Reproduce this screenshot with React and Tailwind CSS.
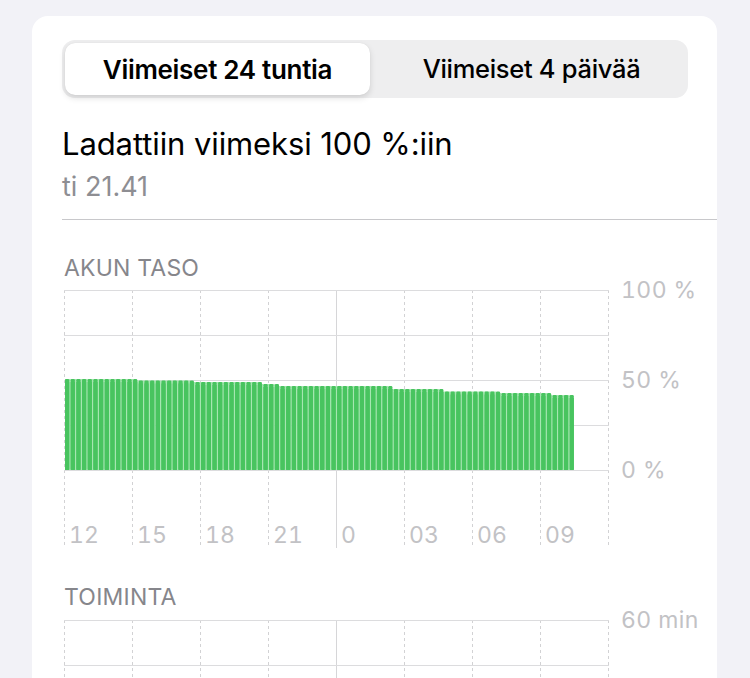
import React from "react";

const FONT = { fontFamily: "Inter, 'Noto Sans', sans-serif" };

const steps = [
  [137, 91],
  [195, 89.5],
  [258, 88],
  [280, 86],
  [392, 84],
  [444, 81],
  [496, 78.5],
  [548, 77],
  [9999, 75],
];

const BAR_P = 5.67;
const bars = Array.from({ length: 90 }, (_, i) => {
  const ax = 65 + i * BAR_P;
  const h = steps.find((s) => ax < s[0])[1];
  return { x: ax - 62, h };
});

const VX = [2, 70, 138, 206, 274, 342, 410, 478, 546];

function GridLines({ hLines, height }) {
  return (
    <svg
      className="absolute inset-0 pointer-events-none"
      width="548"
      height={height}
      viewBox={`0 0 548 ${height}`}
    >
      {VX.map((x, i) => (
        <line
          key={"v" + i}
          x1={x + 0.5}
          x2={x + 0.5}
          y1={1}
          y2={height}
          stroke={i === 4 ? "#d6d6d8" : "#d2d2d4"}
          strokeWidth="1"
          strokeDasharray={i === 4 ? undefined : "3 3"}
        />
      ))}
      {hLines.map((y, i) => (
        <line
          key={"h" + i}
          x1={2}
          x2={547}
          y1={y}
          y2={y}
          stroke="#dcdcde"
          strokeWidth="1"
        />
      ))}
    </svg>
  );
}

const XLABELS = ["12", "15", "18", "21", "0", "03", "06", "09"];

export default function App() {
  return (
    <div
      className="w-[750px] h-[678px] overflow-hidden bg-[#f2f2f7]"
      style={FONT}
    >
      <div className="ml-[32px] mt-[16px] w-[685px] bg-white rounded-[16px] pt-[24px] pl-[30px] pb-[40px]">
        {/* Segmented control */}
        <div className="mr-[29px] h-[58px] rounded-[13px] bg-[#eeeeef] p-[3px] flex">
          <div className="w-[305px] h-full rounded-[10px] bg-white shadow-[0_3px_6px_rgba(0,0,0,0.13),0_0_1px_rgba(0,0,0,0.1)] flex items-center justify-center text-[26px] font-semibold text-black tracking-[-0.3px]">
            Viimeiset 24 tuntia
          </div>
          <div className="flex-1 h-full flex items-center justify-center pl-[8px] text-[25.5px] font-medium text-black tracking-[-0.3px]">
            Viimeiset 4 päivää
          </div>
        </div>

        {/* Title */}
        <div className="mt-[28px] text-[31px] leading-[36px] text-black tracking-[-0.1px]">
          Ladattiin viimeksi 100 %:iin
        </div>
        <div className="mt-[10px] text-[27px] leading-[30px] text-[#8e8e93]">
          ti 21.41
        </div>
        <div className="mt-[17px] h-px bg-[#c8c8cb]" />

        {/* Battery level */}
        <div className="mt-[35px] ml-[2px] text-[23px] leading-[26px] text-[#86868b] tracking-[0.2px]">
          AKUN TASO
        </div>
        <div className="mt-[8px] flex">
          <div className="relative w-[548px] h-[259px] flex flex-col">
            <GridLines hLines={[1.5, 46.5, 91.5, 136.5, 181.5]} height={259} />
            <svg
              className="relative"
              width="548"
              height="182"
              viewBox="0 0 548 182"
            >
              {bars.map((b, i) => (
                <g key={i}>
                  {i < bars.length - 1 && (
                    <rect
                      x={b.x}
                      y={181 - Math.min(b.h, bars[i + 1].h)}
                      width={BAR_P}
                      height={Math.min(b.h, bars[i + 1].h)}
                      fill="#a6e6b1"
                    />
                  )}
                  <rect
                    x={b.x}
                    y={181 - b.h}
                    width={4.2}
                    height={b.h}
                    rx="1.2"
                    fill="#48c45f"
                  />
                  <rect
                    x={b.x}
                    y={181 - b.h + 3}
                    width={4.2}
                    height={b.h - 3}
                    fill="#48c45f"
                  />
                </g>
              ))}
            </svg>
            <div className="relative ml-[2px] grid grid-cols-8 w-[544px] flex-1">
              {XLABELS.map((l) => (
                <div
                  key={l}
                  className="pl-[5px] pt-[51px] text-[23px] leading-[26px] text-[#c2c2c5] tabular-nums"
                >
                  {l}
                </div>
              ))}
            </div>
          </div>
          <div className="ml-[11px] mt-[1.5px] h-[180px] flex flex-col justify-between text-[23px] text-[#c2c2c5] tabular-nums tracking-[0.4px]">
            <div className="h-0 flex items-center">100 %</div>
            <div className="h-0 flex items-center">50 %</div>
            <div className="h-0 flex items-center">0 %</div>
          </div>
        </div>

        {/* Activity */}
        <div className="mt-[36px] ml-[2px] text-[23px] leading-[26px] text-[#86868b] tracking-[0.2px]">
          TOIMINTA
        </div>
        <div className="mt-[9px] flex">
          <div className="relative w-[548px] h-[259px]">
            <GridLines hLines={[1.5, 46.5, 91.5, 136.5, 181.5]} height={259} />
          </div>
          <div className="ml-[11px] mt-[1.5px] h-[180px] flex flex-col justify-between text-[23px] text-[#c2c2c5] tabular-nums tracking-[0.4px]">
            <div className="h-0 flex items-center">60 min</div>
          </div>
        </div>
      </div>
    </div>
  );
}
